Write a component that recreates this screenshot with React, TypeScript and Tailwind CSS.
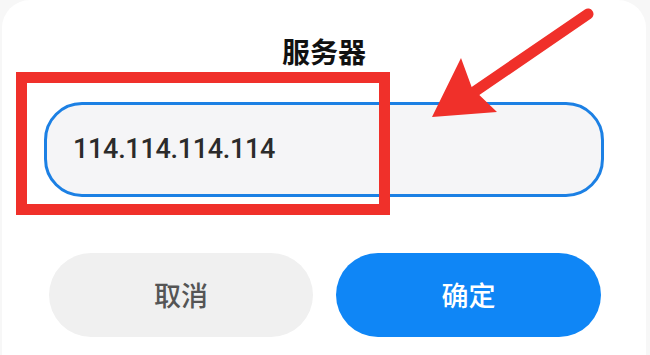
import React from "react";

const cjk = '"Noto Sans CJK SC", "Noto Sans", sans-serif';

export default function App() {
  return (
    <div className="w-[650px] h-[355px] bg-[#f7f7f7] overflow-hidden">
      <div className="relative h-[355px] ml-[2px] mr-[4px] bg-white rounded-t-[28px] flex flex-col items-center">
        {/* title */}
        <h1
          className="pt-[37px] text-[28px] leading-[28px] font-semibold text-[#111]"
          style={{ fontFamily: cjk }}
        >
          服务器
        </h1>

        {/* input */}
        <div className="mt-[37px] w-[560px] h-[95px] rounded-[38px] border-[3px] border-[#1c80e4] bg-[#f5f5f7] flex items-center pl-[26px]">
          <span
            className="text-[27px] font-medium text-[#2b2b2b] tracking-[-0.3px]"
            style={{ fontFamily: 'Roboto, "Noto Sans", sans-serif' }}
          >
            114.114.114.114
          </span>
        </div>

        {/* buttons */}
        <div className="mt-[56px] ml-[2px] flex gap-[23px]">
          <button
            className="w-[264px] h-[84px] rounded-full bg-[#f0f0f0] text-[27px] font-medium text-[#555]"
            style={{ fontFamily: cjk }}
          >
            取消
          </button>
          <button
            className="w-[265px] h-[84px] rounded-full bg-[#0f86f6] text-[27px] font-medium text-white"
            style={{ fontFamily: cjk }}
          >
            确定
          </button>
        </div>

        {/* annotation: red box */}
        <div className="absolute left-[14px] top-[72px] w-[374px] h-[143px] border-[11px] border-[#f0302a]" />

        {/* annotation: arrow */}
        <svg
          className="absolute left-[-2px] top-0"
          width="650"
          height="140"
          viewBox="0 0 650 140"
        >
          <line
            x1="588"
            y1="14"
            x2="474"
            y2="92"
            stroke="#f0302a"
            strokeWidth="11"
            strokeLinecap="round"
          />
          <polygon points="432,117 461,58 472,88 497,112" fill="#f0302a" />
        </svg>
      </div>
    </div>
  );
}
